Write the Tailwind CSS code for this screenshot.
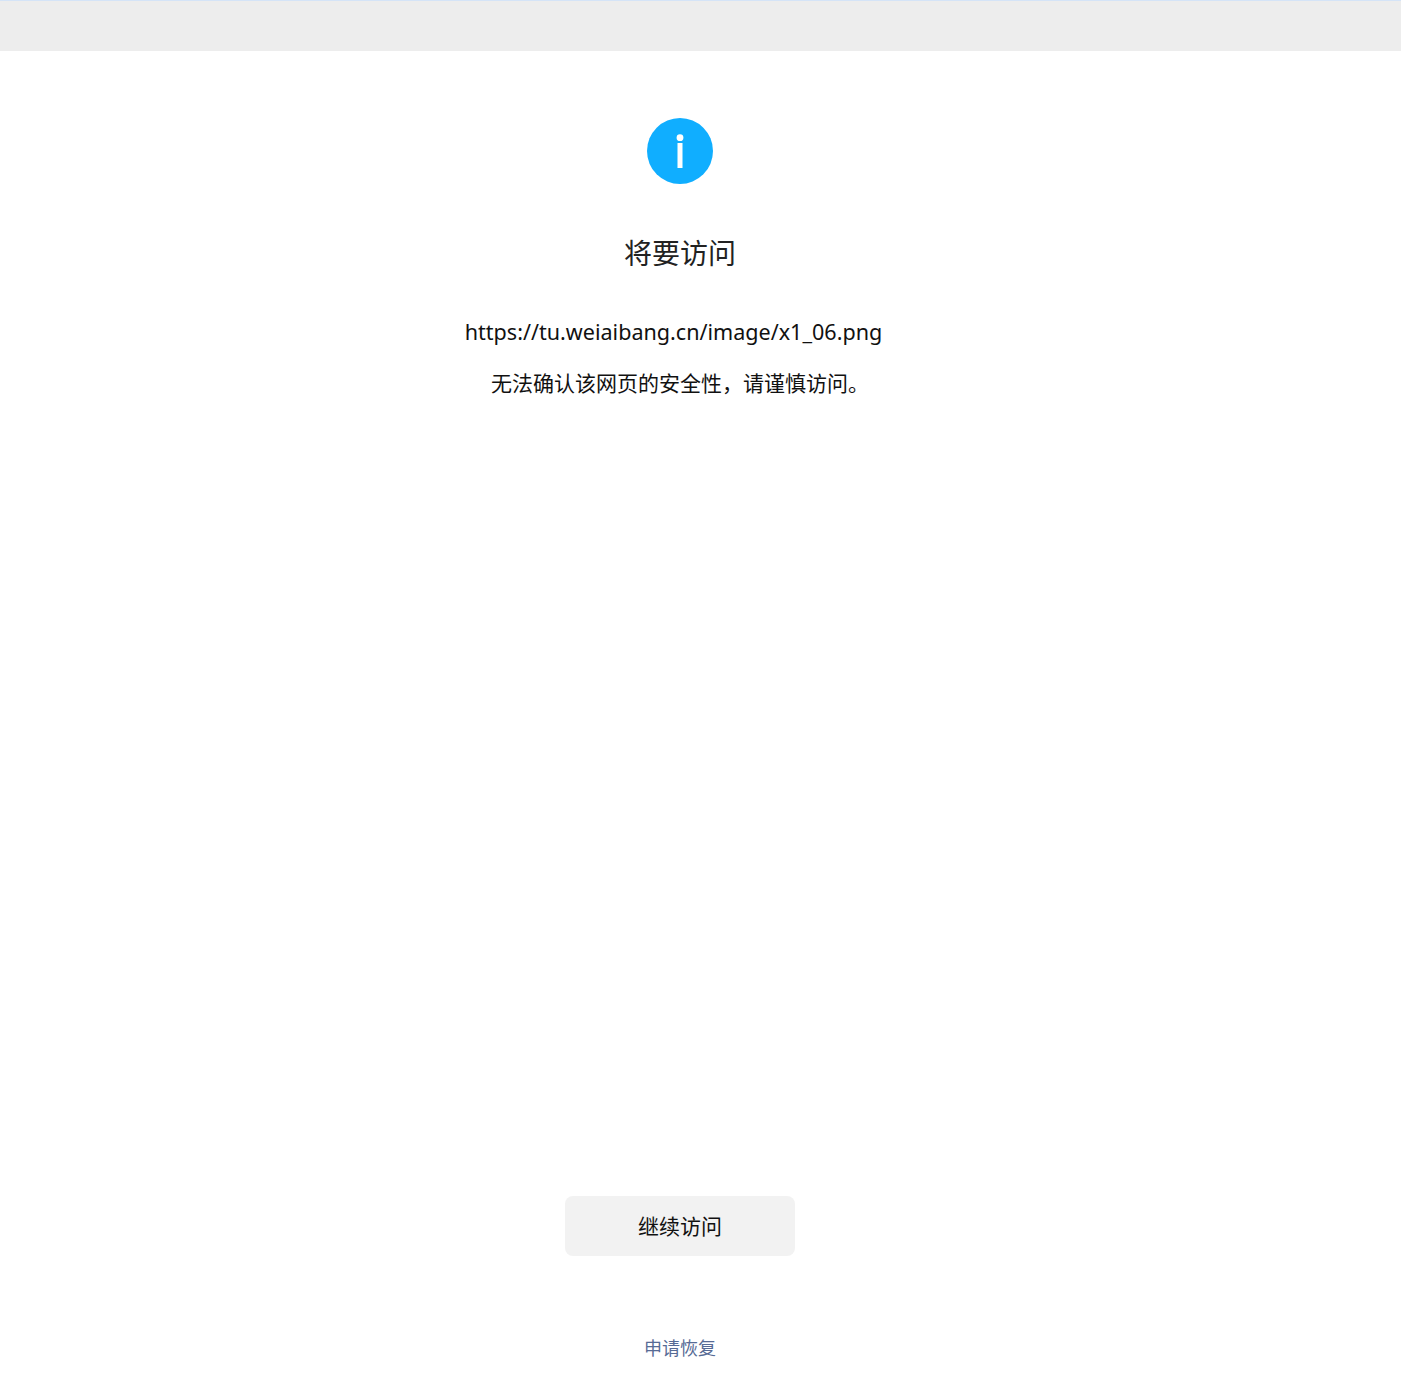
<!DOCTYPE html>
<html lang="zh-CN">
<head>
  <meta charset="UTF-8" />
  <title>将要访问</title>
  <script src="https://cdn.jsdelivr.net/npm/@tailwindcss/browser@4"></script>
</head>
<body class="bg-white font-['Noto_Sans','Noto_Sans_CJK_SC',sans-serif]">
  <div class="h-[51px] bg-[#ededed] border-t border-[#d5e4f7]"></div>
  <div class="h-[1324px] w-[1360px] flex flex-col items-center">
    <svg class="mt-[67px] w-[66px] h-[66px]" viewBox="0 0 66 66">
      <circle cx="33" cy="33" r="33" fill="#10aeff" />
      <circle cx="33" cy="19.7" r="3.4" fill="#fff" />
      <rect x="30.5" y="25" width="5" height="25" fill="#fff" />
    </svg>
    <h1 class="mt-[49px] text-[28px] leading-[40px] text-[#222]">将要访问</h1>
    <p class="mt-[39px] pr-[13px] text-[21.55px] leading-[40px] text-[#111]">https://tu.weiaibang.cn/image/x1_06.png</p>
    <p class="mt-[11px] text-[21px] leading-[40px] text-[#111]">无法确认该网页的安全性，请谨慎访问。</p>
    <button class="mt-[793px] w-[230px] h-[60px] pt-[2px] rounded-lg bg-[#f2f2f2] text-[21px] text-[#111]">继续访问</button>
    <a class="mt-[80px] text-lg leading-6 text-[#576b95]">申请恢复</a>
  </div>
</body>
</html>
